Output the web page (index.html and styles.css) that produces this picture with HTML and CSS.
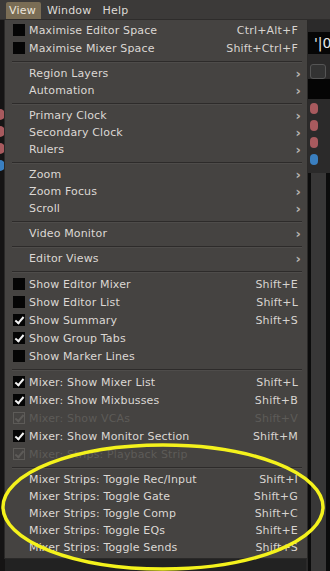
FILE: index.html
```html
<!DOCTYPE html>
<html>
<head>
<meta charset="utf-8">
<link rel="stylesheet" href="styles.css">
</head>
<body>
<div class="app">
  <div class="menubar">
    <span class="mb-item active">View</span>
    <span class="mb-item">Window</span>
    <span class="mb-item">Help</span>
  </div>
  <div class="workspace">
    <div class="strip left">
      <div class="dot red t1"></div>
      <div class="dot red"></div>
      <div class="dot red"></div>
      <div class="dot blue"></div>
    </div>
    <div class="center"></div>
    <div class="strip right">
      <div class="clock">'|0</div>
      <div class="btn"></div>
      <div class="blackbar"></div>
      <div class="dots">
        <div class="dot red"></div>
        <div class="dot red"></div>
        <div class="dot red"></div>
        <div class="dot blue"></div>
      </div>
      <div class="rails"></div>
    </div>
  </div>

  <div class="menu">
    <div class="item"><span class="cb"></span><span class="label">Maximise Editor Space</span><span class="key">Ctrl+Alt+F</span></div>
    <div class="item"><span class="cb"></span><span class="label">Maximise Mixer Space</span><span class="key">Shift+Ctrl+F</span></div>
    <div class="sep"></div>
    <div class="item sub"><span class="label">Region Layers</span><span class="arrow">›</span></div>
    <div class="item sub"><span class="label">Automation</span><span class="arrow">›</span></div>
    <div class="sep"></div>
    <div class="item sub"><span class="label">Primary Clock</span><span class="arrow">›</span></div>
    <div class="item sub"><span class="label">Secondary Clock</span><span class="arrow">›</span></div>
    <div class="item sub"><span class="label">Rulers</span><span class="arrow">›</span></div>
    <div class="sep"></div>
    <div class="item sub"><span class="label">Zoom</span><span class="arrow">›</span></div>
    <div class="item sub"><span class="label">Zoom Focus</span><span class="arrow">›</span></div>
    <div class="item sub"><span class="label">Scroll</span><span class="arrow">›</span></div>
    <div class="sep"></div>
    <div class="item sub"><span class="label">Video Monitor</span><span class="arrow">›</span></div>
    <div class="sep"></div>
    <div class="item sub"><span class="label">Editor Views</span><span class="arrow">›</span></div>
    <div class="sep"></div>
    <div class="item"><span class="cb"></span><span class="label">Show Editor Mixer</span><span class="key">Shift+E</span></div>
    <div class="item"><span class="cb"></span><span class="label">Show Editor List</span><span class="key">Shift+L</span></div>
    <div class="item"><span class="cb on"></span><span class="label">Show Summary</span><span class="key">Shift+S</span></div>
    <div class="item"><span class="cb on"></span><span class="label">Show Group Tabs</span><span class="key"></span></div>
    <div class="item"><span class="cb"></span><span class="label">Show Marker Lines</span><span class="key"></span></div>
    <div class="sep"></div>
    <div class="item"><span class="cb on"></span><span class="label">Mixer: Show Mixer List</span><span class="key">Shift+L</span></div>
    <div class="item"><span class="cb on"></span><span class="label">Mixer: Show Mixbusses</span><span class="key">Shift+B</span></div>
    <div class="item disabled"><span class="cb on"></span><span class="label">Mixer: Show VCAs</span><span class="key">Shift+V</span></div>
    <div class="item"><span class="cb on"></span><span class="label">Mixer: Show Monitor Section</span><span class="key">Shift+M</span></div>
    <div class="item disabled"><span class="cb on"></span><span class="label">Mixer: Strips: Playback Strip</span><span class="key"></span></div>
    <div class="sep"></div>
    <div class="item plain"><span class="label">Mixer Strips: Toggle Rec/Input</span><span class="key">Shift+I</span></div>
    <div class="item plain"><span class="label">Mixer Strips: Toggle Gate</span><span class="key">Shift+G</span></div>
    <div class="item plain"><span class="label">Mixer Strips: Toggle Comp</span><span class="key">Shift+C</span></div>
    <div class="item plain"><span class="label">Mixer Strips: Toggle EQs</span><span class="key">Shift+E</span></div>
    <div class="item plain"><span class="label">Mixer Strips: Toggle Sends</span><span class="key">Shift+S</span></div>
  </div>

  <svg class="annot" width="330" height="571" viewBox="0 0 330 571">
    <ellipse cx="163" cy="507" rx="160" ry="62" fill="none" stroke="#f4f21c" stroke-width="3.5"/>
  </svg>
</div>
</body>
</html>
```

FILE: styles.css
```css
html, body {
  margin: 0;
  padding: 0;
  background: #1b1a1a;
}
.app {
  position: relative;
  width: 330px;
  height: 571px;
  overflow: hidden;
  font-family: "DejaVu Sans", "Liberation Sans", sans-serif;
  font-size: 11px;
  color: #dcd8d4;
}
.menubar {
  height: 20px;
  background: #3c3a39;
  border-bottom: 1px solid #2e2c2b;
  display: flex;
  align-items: stretch;
  padding-left: 6px;
  box-sizing: border-box;
}
.mb-item {
  display: flex;
  align-items: center;
  padding: 0 5px 0 3px;
  margin-right: 3px;
  margin-top: 2px;
  letter-spacing: 0.2px;
  color: #dedad6;
}
.mb-item.active {
  background: #7a6d55;
  border-radius: 2px 2px 0 0;
  color: #ece6dc;
}
.workspace {
  display: flex;
  height: 551px;
}
.strip {
  background: #2a2828;
  display: flex;
  flex-direction: column;
}
.strip.left {
  width: 5px;
  background: #151414;
  align-items: flex-start;
  padding-top: 89px;
  gap: 6px;
}
.strip.left .dot {
  width: 5px;
  height: 11px;
  border-radius: 0 5px 5px 0;
}
.center {
  flex: 1;
  background: #222;
}
.strip.right {
  width: 22px;
  background: #2b2a2a;
  padding-left: 2px;
}
.clock {
  margin-top: 12px;
  height: 22px;
  background: #060606;
  color: #e8e8e8;
  font-size: 14px;
  line-height: 22px;
  padding-left: 6px;
}
.btn {
  margin: 10px 4px 0 2px;
  height: 13px;
  border: 1px solid #555;
  border-radius: 3px;
  background: #333;
}
.blackbar {
  height: 20px;
  background: #050505;
}
.dots {
  display: flex;
  flex-direction: column;
  gap: 6px;
  padding: 4px 0 0 2px;
}
.dot {
  width: 8px;
  height: 11px;
  border-radius: 5px;
}
.dot.red { background: #a85a5e; }
.dot.blue { background: #3a7fc0; }
.rails {
  flex: 1;
  margin-top: 8px;
  border-left: 3px solid #0c0c0c;
  border-right: 4px solid #0c0c0c;
  background: #383737;
}

.menu {
  position: absolute;
  left: 4px;
  top: 20px;
  width: 304px;
  box-sizing: border-box;
  background: #454341;
  border: 1px solid #2a2928;
  border-top: none;
  padding: 1px 0 2px 0;
}
.item {
  display: flex;
  align-items: center;
  height: 18px;
  padding: 0 9px 0 8px;
  letter-spacing: 0.15px;
}
.item.sub, .item.plain {
  height: 17px;
}
.cb {
  width: 12px;
  height: 12px;
  background: #050505;
  margin-right: 4px;
  flex: none;
  position: relative;
}
.cb.on::after {
  content: "";
  position: absolute;
  left: 4px;
  top: 1px;
  width: 3px;
  height: 7px;
  border-right: 2px solid #f4f4f4;
  border-bottom: 2px solid #f4f4f4;
  transform: rotate(40deg);
}
.item.sub .label, .item.plain .label {
  margin-left: 16px;
}
.label {
  flex: 1;
  white-space: nowrap;
}
.key {
  color: #d8d4d0;
  letter-spacing: 0.2px;
}
.arrow {
  color: #b8b4b0;
  font-size: 13px;
  font-weight: bold;
  margin-right: -3px;
}
.item.disabled .label,
.item.disabled .key {
  color: #5d5b58;
}
.item.disabled .cb {
  background: transparent;
  border: 1px solid #5d5b58;
  box-sizing: border-box;
}
.item.disabled .cb.on::after {
  left: 3px;
  top: 0;
  border-color: #5d5b58;
}
.sep {
  height: 8px;
  display: flex;
  align-items: center;
  padding: 0 5px 0 7px;
}
.sep::before {
  content: "";
  flex: 1;
  height: 1px;
  background: #2d2b2a;
  box-shadow: 0 1px 0 #4e4c4a;
}
.annot {
  position: absolute;
  left: 0;
  top: 0;
  pointer-events: none;
}
```
